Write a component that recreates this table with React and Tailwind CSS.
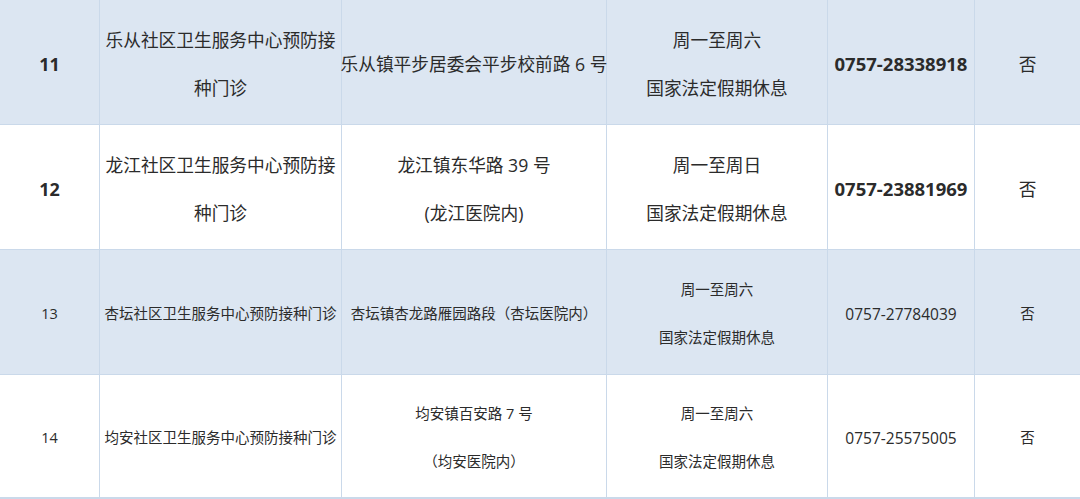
import React from "react";

const rows = [
  {
    no: "11",
    name: ["乐从社区卫生服务中心预防接", "种门诊"],
    addr: ["乐从镇平步居委会平步校前路 6 号"],
    hours: ["周一至周六", "国家法定假期休息"],
    phone: "0757-28338918",
    big: true,
    shade: true,
  },
  {
    no: "12",
    name: ["龙江社区卫生服务中心预防接", "种门诊"],
    addr: ["龙江镇东华路 39 号", "(龙江医院内)"],
    hours: ["周一至周日", "国家法定假期休息"],
    phone: "0757-23881969",
    big: true,
    shade: false,
  },
  {
    no: "13",
    name: ["杏坛社区卫生服务中心预防接种门诊"],
    addr: ["杏坛镇杏龙路雁园路段（杏坛医院内）"],
    hours: ["周一至周六", "国家法定假期休息"],
    phone: "0757-27784039",
    big: false,
    shade: true,
  },
  {
    no: "14",
    name: ["均安社区卫生服务中心预防接种门诊"],
    addr: ["均安镇百安路 7 号", "（均安医院内）"],
    hours: ["周一至周六", "国家法定假期休息"],
    phone: "0757-25575005",
    big: false,
    shade: false,
  },
];

function Cell({ lines, size, bold, last }) {
  return (
    <div
      className={`flex flex-col items-center justify-center pt-[3px] text-center leading-[48px] ${
        last ? "" : "border-r border-[#cad9ea]"
      } ${size} ${bold ? "font-bold" : ""}`}
    >
      {lines.map((l, i) => (
        <div key={i} className="whitespace-nowrap">
          {l}
        </div>
      ))}
    </div>
  );
}

export default function App() {
  return (
    <div
      className="w-[1080px] h-[499px] overflow-hidden bg-white text-[#2b2b2b] border-b-2 border-[#cad9ea]"
      style={{ fontFamily: '"Open Sans", "Noto Sans CJK SC", sans-serif' }}
    >
      {rows.map((r, i) => {
        const txt = r.big ? "text-[17.7px]" : "text-[14.5px]";
        const num = r.big ? "text-[18px]" : "text-[14.5px]";
        const ph = r.big ? "text-[18.5px]" : "text-[15.5px]";
        return (
          <div
            key={r.no}
            className={`grid grid-cols-[100px_242px_265px_221px_147px_105px] ${
              i === 3 ? "h-[122px]" : "h-[125px]"
            } ${i < 3 ? "border-b border-[#cad9ea]" : ""} ${
              r.shade ? "bg-[#dce6f2]" : "bg-white"
            }`}
          >
            <Cell lines={[r.no]} size={num} bold={r.big} />
            <Cell lines={r.name} size={txt} />
            <Cell lines={r.addr} size={txt} />
            <Cell lines={r.hours} size={txt} />
            <Cell lines={[r.phone]} size={ph} bold={r.big} />
            <Cell lines={["否"]} size={txt} last />
          </div>
        );
      })}
    </div>
  );
}
